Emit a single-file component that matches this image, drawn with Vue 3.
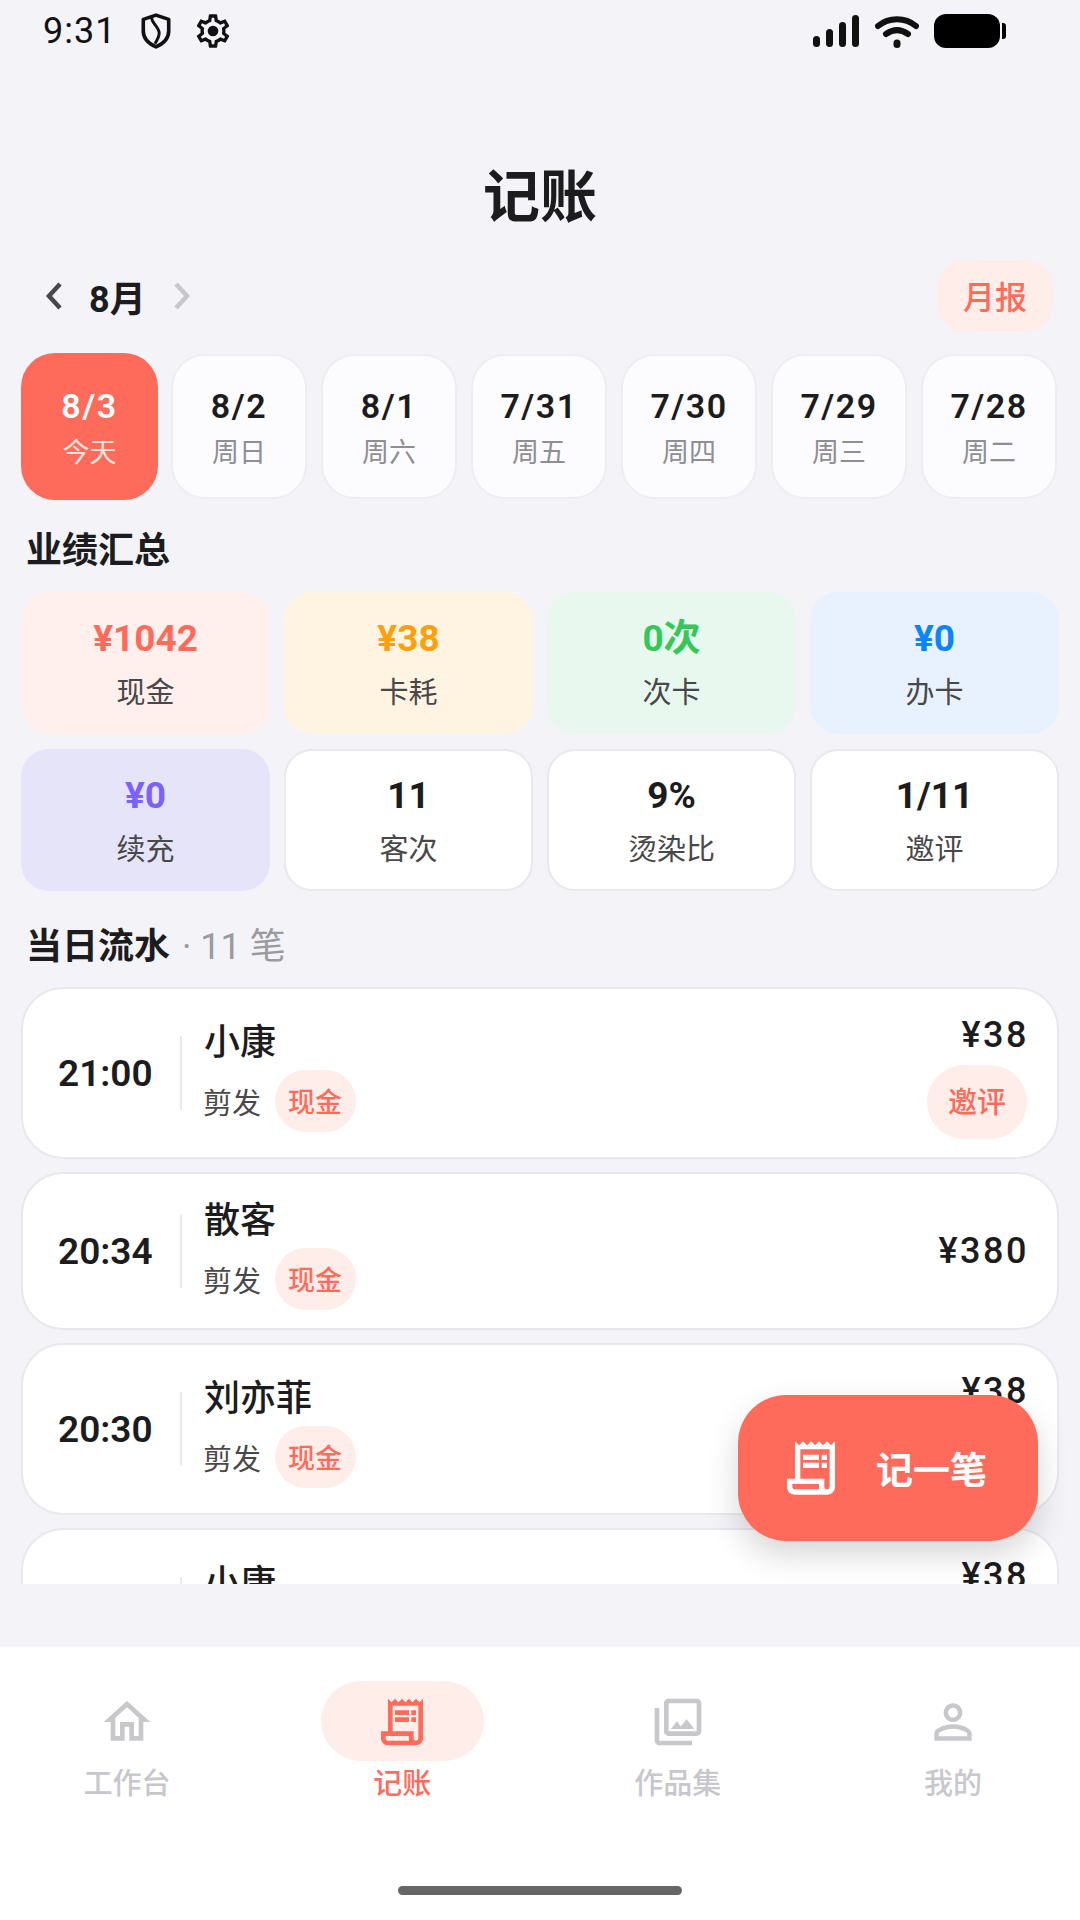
<script setup>
const receiptMain = 'M19.5 3.5L18 2l-1.5 1.5L15 2l-1.5 1.5L12 2l-1.5 1.5L9 2 7.5 3.5 6 2v14H3v3c0 1.66 1.34 3 3 3h12c1.66 0 3-1.34 3-3V2l-1.5 1.5zM15 20H6c-.55 0-1-.45-1-1v-1h10v2zm4-1c0 .55-.45 1-1 1s-1-.45-1-1v-3H8V5h11v14z'
const receiptLines = 'M9 7h6v2H9zm7 0h2v2h-2zm-7 3h6v2H9zm7 0h2v2h-2z'

const days = [
  { date: '8/3', week: '今天', active: true },
  { date: '8/2', week: '周日' },
  { date: '8/1', week: '周六' },
  { date: '7/31', week: '周五' },
  { date: '7/30', week: '周四' },
  { date: '7/29', week: '周三' },
  { date: '7/28', week: '周二' },
]

const stats = [
  { value: '¥1042', label: '现金', tone: 'coral' },
  { value: '¥38', label: '卡耗', tone: 'orange' },
  { value: '0次', label: '次卡', tone: 'green' },
  { value: '¥0', label: '办卡', tone: 'blue' },
  { value: '¥0', label: '续充', tone: 'purple' },
  { value: '11', label: '客次', tone: 'plain' },
  { value: '9%', label: '烫染比', tone: 'plain' },
  { value: '1/11', label: '邀评', tone: 'plain' },
]

const rows = [
  { time: '21:00', name: '小康', amount: '¥38', invite: true },
  { time: '20:34', name: '散客', amount: '¥380', invite: false },
  { time: '20:30', name: '刘亦菲', amount: '¥38', invite: true },
  { time: '20:12', name: '小康', amount: '¥38', invite: true },
]

const tabs = [
  { label: '工作台', icon: 'home' },
  { label: '记账', icon: 'receipt', active: true },
  { label: '作品集', icon: 'gallery' },
  { label: '我的', icon: 'person' },
]
</script>

<template>
  <div class="page">
    <div class="status">
      <span class="clock">9:31</span>
      <svg class="st-shield" viewBox="0 0 30 34" fill="none" stroke="#111" stroke-width="3.4" stroke-linejoin="round">
        <path d="M15 2 27 6v11c0 7-5 12-12 15C8 29 3 24 3 17V6z" />
        <path d="M11 4c-1 5 7 9 7 15 0 4-2 7-4 10" stroke-width="2.8" />
      </svg>
      <svg class="st-gear" viewBox="0 0 24 24" fill="#111">
        <path d="M19.43 12.98c.04-.32.07-.64.07-.98s-.03-.66-.07-.98l2.11-1.65c.19-.15.24-.42.12-.64l-2-3.46c-.12-.22-.39-.3-.61-.22l-2.49 1c-.52-.4-1.08-.73-1.69-.98l-.38-2.65C14.46 2.18 14.25 2 14 2h-4c-.25 0-.46.18-.49.42l-.38 2.65c-.61.25-1.17.59-1.69.98l-2.49-1c-.23-.09-.49 0-.61.22l-2 3.46c-.13.22-.07.49.12.64l2.11 1.65c-.04.32-.07.65-.07.98s.03.66.07.98l-2.11 1.65c-.19.15-.24.42-.12.64l2 3.46c.12.22.39.3.61.22l2.49-1c.52.4 1.08.73 1.69.98l.38 2.65c.03.24.24.42.49.42h4c.25 0 .46-.18.49-.42l.38-2.65c.61-.25 1.17-.59 1.69-.98l2.49 1c.23.09.49 0 .61-.22l2-3.46c.12-.22.07-.49-.12-.64l-2.11-1.65zM17.45 11.27c.04.31.05.52.05.73s-.02.43-.05.73l-.14 1.13.89.7 1.08.84-.7 1.21-1.27-.51-1.04-.42-.9.68c-.43.32-.84.56-1.25.73l-1.06.43-.16 1.13-.2 1.35h-1.4l-.19-1.35-.16-1.13-1.06-.43c-.43-.18-.83-.41-1.23-.71l-.91-.7-1.06.43-1.27.51-.7-1.21 1.08-.84.89-.7-.14-1.13c-.03-.31-.05-.54-.05-.74s.02-.43.05-.73l.14-1.13-.89-.7-1.08-.84.7-1.21 1.27.51 1.04.42.9-.68c.43-.32.84-.56 1.25-.73l1.06-.43.16-1.13.2-1.35h1.39l.19 1.35.16 1.13 1.06.43c.43.18.83.41 1.23.71l.91.7 1.06-.43 1.27-.51.7 1.21-1.07.85-.89.7.14 1.13z" />
        <circle cx="12" cy="12" r="3.2" />
      </svg>
      <svg class="st-signal" viewBox="0 0 46 32" fill="#111">
        <rect x="0" y="21" width="7" height="11" rx="3.5" />
        <rect x="13" y="14" width="7" height="18" rx="3.5" />
        <rect x="26" y="7" width="7" height="25" rx="3.5" />
        <rect x="39" y="0" width="7" height="32" rx="3.5" />
      </svg>
      <svg class="st-wifi" viewBox="0 0 44 34" fill="none" stroke="#111" stroke-width="6" stroke-linecap="round">
        <path d="M3 12c11-9 27-9 38 0" />
        <path d="M11 20c7-5 15-5 22 0" />
        <path d="M22 29v1.5" stroke-width="7" />
      </svg>
      <span class="st-battery"><i></i></span>
    </div>

    <h1 class="title">记账</h1>

    <div class="month-row">
      <svg class="chev" viewBox="0 0 20 30" fill="none" stroke="#48484a" stroke-width="4.5">
        <path d="M16 3 5 15l11 12" />
      </svg>
      <span class="month">8月</span>
      <svg class="chev next" viewBox="0 0 20 30" fill="none" stroke="#c7c7cc" stroke-width="4.5">
        <path d="M4 3l11 12L4 27" />
      </svg>
      <button class="report" type="button">月报</button>
    </div>

    <div class="days">
      <div v-for="d in days" :key="d.date" class="day" :class="{ active: d.active }">
        <span class="day-date">{{ d.date }}</span>
        <span class="day-week">{{ d.week }}</span>
      </div>
    </div>

    <h2 class="section">业绩汇总</h2>

    <div class="stats">
      <div v-for="s in stats" :key="s.label" class="stat" :class="s.tone">
        <span class="stat-value">{{ s.value }}</span>
        <span class="stat-label">{{ s.label }}</span>
      </div>
    </div>

    <h2 class="section flow-head">当日流水<span class="count"> · 11 笔</span></h2>

    <div class="list">
      <div v-for="(r, i) in rows" :key="i" class="row" :class="{ tall: r.invite }">
        <span class="time">{{ r.time }}</span>
        <span class="divider"></span>
        <div class="info">
          <span class="name">{{ r.name }}</span>
          <div class="meta">
            <span class="service">剪发</span>
            <span class="pay">现金</span>
          </div>
        </div>
        <div class="side">
          <span class="amount">{{ r.amount }}</span>
          <span v-if="r.invite" class="invite">邀评</span>
        </div>
      </div>
    </div>

    <button class="fab" type="button">
      <svg viewBox="0 0 24 24" fill="#fff">
        <path :d="receiptMain" />
        <path :d="receiptLines" />
      </svg>
      <span>记一笔</span>
    </button>

    <nav class="tabbar">
      <div class="tabs">
        <div v-for="t in tabs" :key="t.label" class="tab" :class="{ active: t.active }">
          <span class="tab-icon">
            <svg viewBox="0 0 24 24" fill="currentColor">
              <path v-if="t.icon === 'home'" d="M12 5.69l5 4.5V18h-2v-6H9v6H7v-7.81l5-4.5M12 3L2 12h3v8h6v-6h2v6h6v-8h3L12 3z" />
              <template v-else-if="t.icon === 'receipt'">
                <path :d="receiptMain" />
                <path :d="receiptLines" />
              </template>
              <path v-else-if="t.icon === 'gallery'" d="M20 4v12H8V4h12m0-2H8c-1.1 0-2 .9-2 2v12c0 1.1.9 2 2 2h12c1.1 0 2-.9 2-2V4c0-1.1-.9-2-2-2zm-8.5 9.67l1.69 2.26 2.48-3.1L19 15H9zM2 6v14c0 1.1.9 2 2 2h14v-2H4V6H2z" />
              <path v-else d="M12 5.9c1.16 0 2.1.94 2.1 2.1s-.94 2.1-2.1 2.1S9.9 9.16 9.9 8s.94-2.1 2.1-2.1m0 9c2.97 0 6.1 1.46 6.1 2.1v1.1H5.9V17c0-.64 3.13-2.1 6.1-2.1M12 4C9.79 4 8 5.79 8 8s1.79 4 4 4 4-1.79 4-4-1.79-4-4-4zm0 9c-2.67 0-8 1.34-8 4v3h16v-3c0-2.66-5.33-4-8-4z" />
            </svg>
          </span>
          <span class="tab-label">{{ t.label }}</span>
        </div>
      </div>
      <div class="home-bar"></div>
    </nav>
  </div>
</template>

<style scoped>
.page { position: relative; width: 1080px; height: 1920px; overflow: hidden; display: flex; flex-direction: column; background: #f3f3f8; color: #1c1c1e; font-family: Roboto, "Noto Sans CJK SC", sans-serif; }

.status { height: 62px; display: flex; align-items: center; padding: 0 80px 0 43px; flex: none; }
.clock { font-family: Roboto, sans-serif; font-size: 36px; letter-spacing: 1px; color: #111; width: 97px; }
.st-shield { width: 32px; height: 36px; margin-right: 25px; }
.st-gear { width: 40px; height: 40px; margin-left: -4px; }
.st-signal { width: 46px; height: 32px; margin-left: auto; }
.st-wifi { width: 44px; height: 34px; margin-left: 16px; }
.st-battery { position: relative; width: 66px; height: 34px; margin-left: 15px; background: #000; border-radius: 12px; }
.st-battery i { position: absolute; right: -6px; top: 9px; width: 4px; height: 16px; border-radius: 0 3px 3px 0; background: #000; }

.title { margin: 100px 0 0; height: 72px; line-height: 72px; text-align: center; font-size: 57px; font-weight: 700; flex: none; }

.month-row { display: flex; align-items: center; height: 72px; margin-top: 26px; padding: 0 27px 0 44px; flex: none; }
.chev { width: 20px; height: 30px; }
.month { margin-left: 25px; font-size: 36px; font-weight: 700; width: 83px; }
.report { margin-left: auto; width: 116px; height: 72px; padding: 0 0 2px; border: none; border-radius: 28px; background: #ffede9; color: #ff6b5b; font-family: inherit; font-size: 32px; font-weight: 500; }

.days { display: flex; align-items: center; gap: 14px; height: 147px; margin-top: 21px; padding-left: 21px; flex: none; }
.day { width: 136px; height: 145px; flex: none; box-sizing: border-box; display: flex; flex-direction: column; align-items: center; justify-content: center; gap: 8px; padding-top: 2px; background: #fcfcfe; border: 2px solid #eeeef2; border-radius: 34px; }
.day.active { width: 137px; height: 147px; margin-right: -1px; background: #ff6b5b; border: none; color: #fff; }
.day-date { font-size: 34px; font-weight: 600; line-height: 42px; letter-spacing: 1.5px; }
.day-week { font-size: 27px; line-height: 36px; color: #8e8e93; }
.day.active .day-week { color: #ffe4df; }

.section { margin: 28px 0 0 26px; height: 46px; line-height: 46px; font-size: 36px; font-weight: 700; flex: none; }

.stats { display: grid; grid-template-columns: repeat(4, 249px); gap: 15px 14px; margin-top: 18px; padding-left: 21px; flex: none; }
.stat { height: 142px; box-sizing: border-box; display: flex; flex-direction: column; align-items: center; justify-content: center; gap: 12px; padding-top: 2px; border-radius: 28px; }
.stat-value { font-size: 37px; font-weight: 700; line-height: 46px; }
.stat-label { font-size: 29px; line-height: 38px; color: #48484a; }
.coral { background: #fff0ed; color: #ff6b5b; }
.orange { background: #fff4e2; color: #ff9f0a; }
.green { background: #e8f8ee; color: #34c759; }
.blue { background: #e8f2fe; color: #0a84ff; }
.purple { background: #e6e4f8; color: #7b61ff; }
.plain { background: #fff; color: #1c1c1e; border: 2px solid #e8e8ed; }

.flow-head { margin-top: 33px; }
.count { margin-left: 3px; font-size: 36px; font-weight: 400; color: #9a9aa0; }

.list { height: 597px; margin-top: 17px; padding: 0 21px; overflow: hidden; display: flex; flex-direction: column; gap: 13px; flex: none; }
.row { height: 158px; flex: none; box-sizing: border-box; display: flex; align-items: center; padding: 0 29px 0 35px; background: #fff; border: 2px solid #e8e8ed; border-radius: 42px; }
.row.tall { height: 172px; }
.time { width: 122px; padding-top: 1px; font-size: 37px; font-weight: 600; }
.divider { width: 2px; height: 74px; background: #e8e8ed; }
.info { margin-left: 22px; padding-top: 5px; display: flex; flex-direction: column; }
.name { font-size: 36px; font-weight: 500; line-height: 48px; }
.meta { display: flex; align-items: center; gap: 14px; margin-left: -1px; padding-top: 3px; }
.service { font-size: 29px; color: #48484a; }
.pay { height: 62px; line-height: 66px; padding: 0 14px 0 13px; width: 54px; border-radius: 31px; background: #ffede9; color: #ff6b5b; font-size: 27px; font-weight: 500; }
.side { margin-left: auto; display: flex; flex-direction: column; align-items: flex-end; gap: 8px; }
.row.tall .side { padding-top: 5px; }
.amount { margin-right: -1px; font-size: 36px; font-weight: 500; letter-spacing: 2.5px; line-height: 44px; }
.invite { height: 74px; line-height: 76px; padding: 0 21px; margin-right: 1px; border-radius: 37px; background: #ffede9; color: #ff6b5b; font-size: 29px; font-weight: 500; }

.fab { position: absolute; left: 738px; top: 1395px; width: 300px; height: 146px; padding: 0 10px 0 0; display: flex; align-items: center; justify-content: center; gap: 33px; border: none; border-radius: 48px; background: #ff6b5b; color: #fff; font-family: inherit; font-size: 37px; font-weight: 600; box-shadow: 0 14px 32px rgba(0, 0, 0, 0.16); }
.fab svg { width: 64px; height: 64px; }

.tabbar { margin-top: auto; height: 273px; flex: none; box-sizing: border-box; padding-top: 34px; background: #fff; display: flex; flex-direction: column; }
.tabs { display: flex; justify-content: space-between; padding: 0 45px; }
.tab { width: 164px; display: flex; flex-direction: column; align-items: center; color: #c7c7cc; }
.tab-icon { width: 163px; height: 80px; padding-top: 2px; box-sizing: border-box; display: flex; align-items: center; justify-content: center; border-radius: 40px; }
.tab-icon svg { width: 56px; height: 56px; }
.tab-label { margin-top: 2px; font-size: 29px; line-height: 42px; font-weight: 500; }
.tab.active { color: #ff6b5b; }
.tab.active .tab-icon { background: #ffede9; }
.home-bar { width: 284px; height: 9px; margin: 81px auto 0; border-radius: 5px; background: #666; }
</style>
